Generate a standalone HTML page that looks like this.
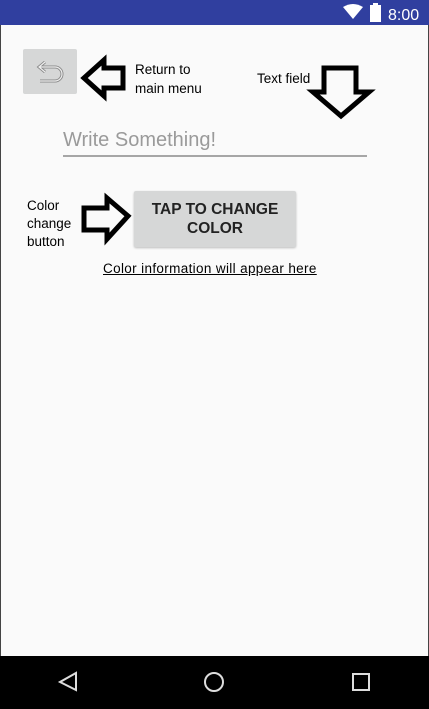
<!DOCTYPE html>
<html><head><style>
body{margin:0;width:429px;height:709px;position:relative;background:#fafafa;font-family:"Liberation Sans",sans-serif;overflow:hidden}
.a{position:absolute}
</style></head><body>
<div class="a" style="left:0;top:0;width:1px;height:709px;background:#444"></div>
<div class="a" style="right:0;top:0;width:1px;height:709px;background:#444"></div>
<div class="a" style="left:0;top:0;width:429px;height:25px;background:#303f9f"></div>
<svg class="a" style="left:340px;top:2px" width="90" height="22">
<path d="M3 5 Q13 -1 23 5 L13 17 Z" fill="#fff"/>
<rect x="30" y="3" width="11" height="17" fill="#fff"/><rect x="33" y="1" width="5" height="3" fill="#fff"/>
<text x="48" y="18" fill="#fff" font-size="16" font-family="Liberation Sans">8:00</text>
</svg>
<div class="a" style="left:23px;top:49px;width:54px;height:45px;background:#d6d7d7;border-radius:2px"></div>
<svg class="a" style="left:23px;top:49px" width="54" height="45"><path d="M22 13 L16 18 L22 23 M16 18 H32 A5 5 0 0 1 32 32 H17" fill="none" stroke="#888" stroke-width="3"/><path d="M22 13 L16 18 L22 23 M16 18 H32 A5 5 0 0 1 32 32 H17" fill="none" stroke="#eee" stroke-width="1.2"/></svg>
<svg class="a" style="left:0;top:0" width="429" height="656">
<g fill="none" stroke="#000" stroke-width="5" stroke-linejoin="miter">
<path d="M84 78 L104 60 L104 68 L123 68 L123 88 L104 88 L104 96 Z"/>
<path d="M324 68 L356 68 L356 92 L369 92 L341 116 L313 92 L324 92 Z"/>
<path d="M84 208 L107 208 L107 198 L128 216 L107 239 L107 230 L84 230 Z"/>
</g>
<line x1="63" y1="156" x2="367" y2="156" stroke="#8a8a8a" stroke-width="1.5"/>
</svg>
<div class="a" style="left:135px;top:60px;font-size:13.5px;line-height:19px;color:#000">Return to<br>main menu</div>
<div class="a" style="left:257px;top:71px;font-size:13.5px;color:#000">Text field</div>
<div class="a" style="left:63px;top:129px;font-size:20px;color:#9a9a9a">Write Something!</div>
<div class="a" style="left:27px;top:197px;font-size:13.5px;line-height:18px;color:#000">Color<br>change<br>button</div>
<div class="a" style="left:134px;top:191px;width:162px;height:56px;background:#d6d7d7;border-radius:2px;box-shadow:0 1px 2px rgba(0,0,0,.25);text-align:center;font-size:15.5px;font-weight:bold;line-height:19px;color:#222;padding-top:9px;box-sizing:border-box">TAP TO CHANGE<br>COLOR</div>
<div class="a" style="left:103px;top:261px;font-size:13.5px;letter-spacing:0.35px;color:#000;text-decoration:underline">Color information will appear here</div>
<div class="a" style="left:0;top:656px;width:429px;height:53px;background:#000"></div>
<svg class="a" style="left:0;top:656px" width="429" height="53">
<g fill="none" stroke="#ddd" stroke-width="2">
<path d="M76 17 L76 34 L60 26 Z"/>
<circle cx="214" cy="26" r="9"/>
<rect x="353" y="18" width="16" height="16"/>
</g></svg>
</body></html>
